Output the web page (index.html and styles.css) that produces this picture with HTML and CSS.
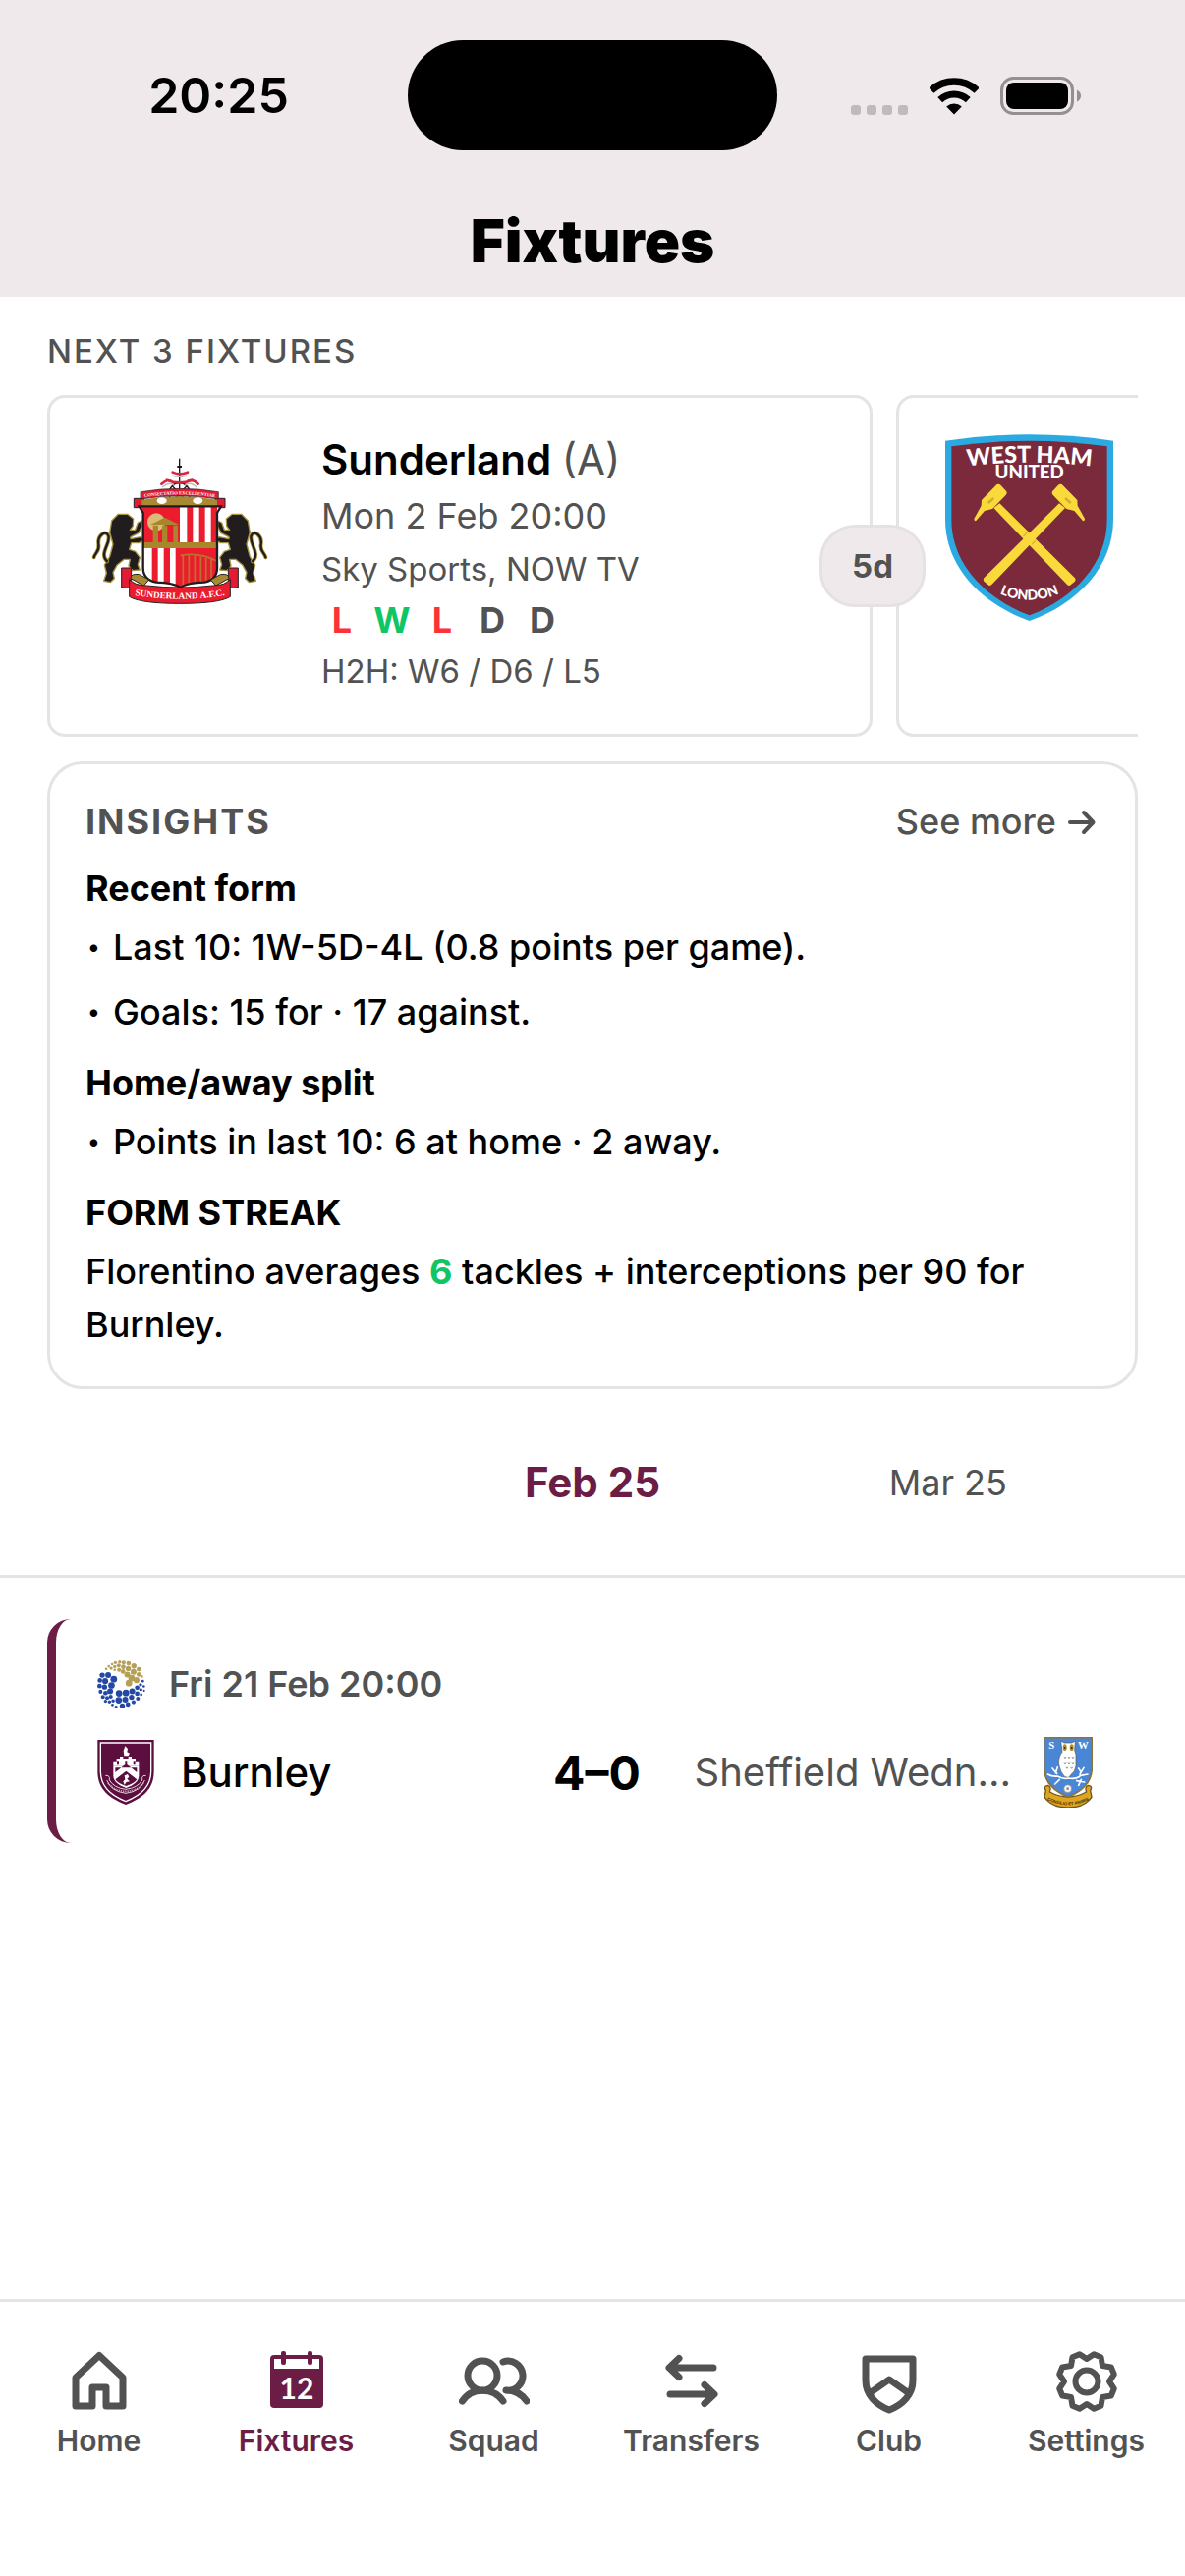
FILE: index.html
```html
<!DOCTYPE html>
<html lang="en">
<head>
    <meta charset="UTF-8">
    <meta name="viewport" content="width=device-width, initial-scale=1.0">
    <title>Fixtures</title>
    <link rel="stylesheet" href="styles.css">
</head>
<body>
    <header class="app-header">
        <div class="status-bar">
            <span class="status-time">20:25</span>
            <div class="island"></div>
            <div class="status-icons">
                <svg class="signal" viewBox="0 0 58 10">
                    <rect x="0" width="10" height="10" rx="3"/>
                    <rect x="16" width="10" height="10" rx="3"/>
                    <rect x="32" width="10" height="10" rx="3"/>
                    <rect x="48" width="10" height="10" rx="3"/>
                </svg>
                <svg class="wifi" viewBox="0 0 50 38">
                    <path d="M1.8 13.1A34 34 0 0 1 48.2 13.1" fill="none" stroke="#000" stroke-width="7.5"/>
                    <path d="M10.7 22.6A21 21 0 0 1 39.3 22.6" fill="none" stroke="#000" stroke-width="7"/>
                    <path d="M25 37.5L17.2 29.6A11.5 11.5 0 0 1 32.8 29.6Z"/>
                </svg>
                <svg class="battery" viewBox="0 0 82 39">
                    <rect x="1.5" y="1.5" width="72" height="36" rx="12" fill="none" stroke="#948f91" stroke-width="3"/>
                    <rect x="6" y="6" width="63" height="27" rx="8"/>
                    <path d="M78 13.5Q82 15.5 82 19.5T78 25.5Z" fill="#948f91"/>
                </svg>
            </div>
        </div>
        <h1 class="page-title">Fixtures</h1>
    </header>

    <main>
        <section class="next-fixtures">
            <h2 class="section-label">NEXT 3 FIXTURES</h2>
            <div class="fixture-strip">
                <article class="fixture-card">
                    <div class="fixture-crest">
                        <!-- Sunderland crest -->
                        <svg class="crest-sunderland" viewBox="40 27 540 468">
                            <!-- ship's wheel and mast -->
                            <g fill="none" stroke="#1b1718" stroke-width="4">
                                <circle cx="309" cy="157" r="32"/>
                                <path d="M309 50V190M277 157H341M287 134L331 180M331 134L287 180"/>
                                <path d="M302 75H316" stroke-width="6"/>
                            </g>
                            <path d="M288 92Q309 102 334 92M270 116Q309 132 348 116M254 128Q276 108 290 124M328 124Q345 108 366 128" fill="none" stroke="#d8243c" stroke-width="8" stroke-linecap="round"/>
                            <path d="M286 102Q309 110 332 102M256 138Q280 118 294 134M324 134Q340 118 362 138" fill="none" stroke="#bbb" stroke-width="4"/>
                            <!-- motto ribbon -->
                            <path d="M170 172H200V200H170ZM418 172H448V200H418Z" fill="#e31b32" stroke="#222" stroke-width="3"/>
                            <path d="M194 176Q309 154 424 176V196H194Z" fill="#a98a33"/>
                            <ellipse cx="255" cy="179" rx="15" ry="10" fill="#fff"/>
                            <ellipse cx="365" cy="179" rx="15" ry="10" fill="#fff"/>
                            <path d="M190 152Q309 132 428 152V174Q309 154 190 174Z" fill="#e31b32" stroke="#222" stroke-width="2"/>
                            <path id="motto" d="M192 170Q309 150 428 170" fill="none"/>
                            <text class="motto-text"><textPath href="#motto" startOffset="50%">CONSECTATIO EXCELLENTIAE</textPath></text>
                            <!-- lions -->
                            <g id="lion">
                                <path d="M98 428L78 424 86 400 80 375 96 350 106 312 96 276 102 240 122 220 150 220 168 234 167 256 158 268 174 268 182 246 194 240 194 258 184 278 160 290 160 296 190 290 202 298 186 308 162 308 156 328 174 334 188 352 182 374 188 390 166 392 154 378 158 358 140 358 118 376 106 398 110 416Z" fill="#211d1e" stroke="#a8953f" stroke-width="4" stroke-linejoin="round"/>
                                <path d="M88 364C62 340 100 310 92 286C84 266 58 286 62 312C66 334 52 336 48 352" fill="none" stroke="#a8953f" stroke-width="12" stroke-linecap="round"/>
                                <path d="M88 364C62 340 100 310 92 286C84 266 58 286 62 312C66 334 52 336 48 352" fill="none" stroke="#211d1e" stroke-width="7" stroke-linecap="round"/>
                            </g>
                            <use href="#lion" transform="translate(620 0) scale(-1 1)"/>
                            <!-- shield -->
                            <clipPath id="sunShield"><path d="M186 196H436L424 216V384Q424 420 385 428Q330 430 312 444Q292 430 238 428Q198 420 198 384V216Z"/></clipPath>
                            <g clip-path="url(#sunShield)">
                                <rect x="186" y="190" width="250" height="255" fill="#fff"/>
                                <rect x="186" y="190" width="124" height="120" fill="#ec1c2f"/>
                                <rect x="310" y="322" width="126" height="124" fill="#ec1c2f"/>
                                <path d="M332 196H350V310H332ZM369 196H387V310H369ZM405 196H424V310H405ZM225 322H243V445H225ZM261 322H280V445H261ZM297 322H310V445H297Z" fill="#ec1c2f"/>
                                <circle cx="238" cy="244" r="27" fill="#dcbb76"/>
                                <path d="M220 252L264 230 308 252ZM228 254H244V306H228ZM256 254H272V306H256ZM290 254H304V306H290Z" fill="#a8862c"/>
                                <path d="M190 306H430V324H190Z" fill="#a8862c"/>
                                <path d="M312 346Q370 336 420 362M320 348V440M338 346V440M356 346V440M374 350V440M390 354V440M406 358V440" fill="none" stroke="#b5762c" stroke-width="5"/>
                            </g>
                            <path d="M186 196H436L424 216V384Q424 420 385 428Q330 430 312 444Q292 430 238 428Q198 420 198 384V216Z" fill="none" stroke="#211d1e" stroke-width="7"/>
                            <!-- name scroll -->
                            <path d="M132 384H162V446L132 444ZM458 446V384H488V444Z" fill="#e31b32" stroke="#222" stroke-width="3"/>
                            <path d="M160 416Q160 400 186 404L216 420 200 438ZM460 416Q460 400 434 404L404 420 420 438Z" fill="#a98a33" stroke="#222" stroke-width="3"/>
                            <path d="M156 418Q170 438 210 438Q310 450 410 438Q450 438 464 418V472Q430 493 310 493Q190 493 156 472Z" fill="#ec1c2f" stroke="#222" stroke-width="3"/>
                            <path id="sunName" d="M160 466Q310 492 460 466" fill="none"/>
                            <text class="sun-text"><textPath href="#sunName" startOffset="50%">SUNDERLAND A.F.C.</textPath></text>
                        </svg>
                    </div>
                    <div class="fixture-info">
                        <h3 class="fixture-team">Sunderland <span class="venue">(A)</span></h3>
                        <p class="fixture-date">Mon 2 Feb 20:00</p>
                        <p class="fixture-tv">Sky Sports, NOW TV</p>
                        <div class="form-row">
                            <span class="form-loss">L</span>
                            <span class="form-win">W</span>
                            <span class="form-loss">L</span>
                            <span>D</span>
                            <span>D</span>
                        </div>
                        <p class="fixture-tv">H2H: W6 / D6 / L5</p>
                    </div>
                    <span class="days-badge">5d</span>
                </article>

                <article class="fixture-card">
                    <div class="fixture-crest">
                        <!-- West Ham crest -->
                        <svg class="crest-westham" viewBox="486 155 513 570">
                            <path d="M486 175Q743 137 999 175V415C999 560 890 672 743 725C596 672 486 560 486 415Z" fill="#2baae2"/>
                            <path d="M505 192Q743 158 980 192V415C980 550 880 655 743 708C606 655 505 550 505 415Z" fill="#7b2a3c"/>
                            <path id="whTop" d="M540 254Q743 228 946 254" fill="none"/>
                            <text class="wh-top"><textPath href="#whTop" startOffset="50%">WEST HAM</textPath></text>
                            <text class="wh-mid" x="743" y="291">UNITED</text>
                            <path id="whLow" d="M648 640Q743 682 838 640" fill="none"/>
                            <text class="wh-low"><textPath href="#whLow" startOffset="50%">LONDON</textPath></text>
                            <g id="hammer">
                                <path d="M634 380L652 366 882 594Q886 600 880 606L866 617Q860 618 856 612Z" fill="#fada3a"/>
                                <path d="M644 308Q650 305 655 310L673 330Q676 336 670 342L630 383 606 389 580 419Q574 421 574 413L596 373 597 356Z" fill="#fada3a"/>
                                <path d="M614 362L632 347 636 353 620 368Z" fill="#d3ad2d"/>
                            </g>
                            <use href="#hammer" transform="translate(1486 0) scale(-1 1)"/>
                            <path d="M724 468L736 456M750 492L762 480" stroke="#d9b32e" stroke-width="4"/>
                        </svg>
                    </div>
                </article>
            </div>
        </section>

        <section class="insights">
            <div class="insights-header">
                <h2 class="insights-title">INSIGHTS</h2>
                <a href="#" class="see-more">See more
                    <svg class="arrow" viewBox="0 0 32 28"><path d="M2 14H25M16 4L25.500 14 16 24"/></svg>
                </a>
            </div>
            <div class="insight">
                <h3>Recent form</h3>
                <ul>
                    <li>Last 10: 1W-5D-4L (0.8 points per game).</li>
                    <li>Goals: 15 for · 17 against.</li>
                </ul>
            </div>
            <div class="insight">
                <h3>Home/away split</h3>
                <ul>
                    <li>Points in last 10: 6 at home · 2 away.</li>
                </ul>
            </div>
            <div class="insight">
                <h3>FORM STREAK</h3>
                <p>Florentino averages <strong class="form-win">6</strong> tackles + interceptions per 90 for Burnley.</p>
            </div>
        </section>

        <div class="months">
            <button type="button" class="month active">Feb 25</button>
            <button type="button" class="month">Mar 25</button>
        </div>

        <article class="match">
            <div class="match-meta">
                <!-- EFL ball -->
                <svg class="crest-efl" viewBox="27 27 146 146">
                    <g fill="#b5a05a">
                        <circle cx="95" cy="32" r="5"/><circle cx="107" cy="34" r="6"/><circle cx="122" cy="36" r="7"/><circle cx="138" cy="44" r="8"/><circle cx="153" cy="54" r="7"/>
                        <circle cx="82" cy="34" r="5"/><circle cx="72" cy="39" r="4"/><circle cx="62" cy="45" r="4"/><circle cx="54" cy="53" r="4"/><circle cx="92" cy="43" r="6"/>
                        <circle cx="80" cy="46" r="5"/><circle cx="69" cy="51" r="5"/><circle cx="106" cy="47" r="7"/><circle cx="121" cy="52" r="8"/><circle cx="137" cy="62" r="9"/>
                        <circle cx="153" cy="70" r="7"/><circle cx="93" cy="56" r="6"/><circle cx="105" cy="61" r="7"/><circle cx="118" cy="70" r="9"/><circle cx="131" cy="81" r="10"/>
                        <circle cx="146" cy="87" r="9"/><circle cx="123" cy="96" r="10"/><circle cx="162" cy="76" r="4"/><circle cx="80" cy="56" r="4"/>
                    </g>
                    <g fill="#2448a5">
                        <circle cx="42" cy="72" r="8"/><circle cx="60" cy="72" r="9"/><circle cx="77" cy="84" r="10"/><circle cx="35" cy="88" r="7"/><circle cx="51" cy="90" r="9"/>
                        <circle cx="70" cy="103" r="10"/><circle cx="34" cy="105" r="7"/><circle cx="49" cy="108" r="8"/><circle cx="66" cy="121" r="9"/><circle cx="37" cy="122" r="6"/>
                        <circle cx="52" cy="126" r="7"/><circle cx="44" cy="138" r="6"/><circle cx="57" cy="141" r="6"/><circle cx="68" cy="137" r="6"/><circle cx="52" cy="151" r="5"/>
                        <circle cx="64" cy="153" r="5"/><circle cx="75" cy="150" r="5"/><circle cx="73" cy="162" r="4"/><circle cx="84" cy="168" r="4"/>
                        <circle cx="93" cy="127" r="10"/><circle cx="114" cy="126" r="10"/><circle cx="133" cy="121" r="9"/><circle cx="92" cy="148" r="10"/><circle cx="112" cy="146" r="9"/>
                        <circle cx="131" cy="139" r="8"/><circle cx="148" cy="128" r="7"/><circle cx="148" cy="110" r="7"/><circle cx="103" cy="165" r="8"/><circle cx="120" cy="161" r="7"/>
                        <circle cx="137" cy="154" r="6"/><circle cx="150" cy="143" r="6"/><circle cx="160" cy="131" r="4"/><circle cx="159" cy="116" r="5"/><circle cx="158" cy="101" r="5"/>
                        <circle cx="168" cy="106" r="4"/><circle cx="165" cy="90" r="4"/><circle cx="169" cy="119" r="3"/>
                    </g>
                </svg>
                <span>Fri 21 Feb 20:00</span>
            </div>
            <div class="match-row">
                <div class="side">
                    <!-- Burnley crest -->
                    <svg class="crest-burnley" viewBox="30 273 172 198">
                        <path d="M30 273H202V370C202 424 166 452 116 471C66 452 30 424 30 370Z" fill="#5c0f3f"/>
                        <path d="M39 282H193V370C193 418 160 444 116 461C72 444 39 418 39 370Z" fill="none" stroke="#fff" stroke-width="4"/>
                        <path d="M111 322L109 306 114 292 122 300 120 310 128 314 124 322ZM88 330H98V324H108V330H124V324H134V330H146V338H156V352H78V338H88Z" fill="#fff"/>
                        <path d="M78 352H156V382C156 400 140 412 117 420C94 412 78 400 78 382Z" fill="#fff"/>
                        <path d="M92 337V349M117 337V349M142 337V349" stroke="#5c0f3f" stroke-width="6"/>
                        <path d="M84 358H150V372L117 346 84 372ZM84 394L117 368 150 394Q142 406 117 414Q92 406 84 394Z" fill="#5c0f3f"/>
                        <path d="M112 382L122 378 126 386 120 392 128 400 118 402 112 410 108 400 114 394Z" fill="#fff"/>
                        <path d="M54 382Q64 380 66 388V396Q80 420 116 424Q152 420 166 396V388Q168 380 178 382M58 396Q70 430 116 436Q162 430 174 396" fill="none" stroke="#e5cfdc" stroke-width="3"/>
                        <path d="M62 404Q78 428 116 430Q154 428 170 404" fill="none" stroke="#d9b9cb" stroke-width="5" stroke-dasharray="3 3"/>
                    </svg>
                    <span class="team home">Burnley</span>
                </div>
                <strong class="score">4–0</strong>
                <div class="side away">
                    <span class="team">Sheffield Wednesday</span>
                    <div class="crest-slot">
                        <!-- Sheffield Wednesday crest -->
                        <svg class="crest-wednesday" viewBox="35 38 150 216">
                            <path d="M42 202Q34 188 48 186Q60 190 54 206Q110 236 166 206Q160 190 172 186Q186 188 178 202L182 222Q160 254 110 254Q60 254 38 222Z" fill="#dfa51e" stroke="#6e5523" stroke-width="4"/>
                            <path d="M37 40H183V130C183 180 150 204 110 222C70 204 37 180 37 130Z" fill="#4a86d6" stroke="#8d7434" stroke-width="5"/>
                            <path d="M88 50L98 56H122L132 50 130 78 134 92 134 126Q132 144 120 152L112 162 100 160Q86 146 82 122Q80 98 92 84Z" fill="#fff" stroke="#555" stroke-width="2"/>
                            <ellipse cx="100" cy="70" rx="6" ry="10" fill="#b4911f"/><ellipse cx="121" cy="70" rx="6" ry="10" fill="#b4911f"/>
                            <circle cx="100" cy="71" r="3" fill="#333"/><circle cx="121" cy="71" r="3" fill="#333"/>
                            <path d="M98 98l3 5 3-5M110 98l3 5 3-5M122 98l3 5 3-5M98 114l3 5 3-5M110 114l3 5 3-5M122 114l3 5 3-5M104 130l3 5 3-5M118 130l3 5 3-5" fill="none" stroke="#666" stroke-width="2"/>
                            <path d="M48 152Q62 160 78 158Q96 168 110 164Q136 168 148 156L170 152M62 134L76 150M78 130L72 148M158 132L146 152M142 134L150 146M70 182L84 168M160 176L136 172M142 186L150 168" fill="none" stroke="#fff" stroke-width="5" stroke-linecap="round"/>
                            <circle cx="109" cy="196" r="12" fill="#f4f4f4" stroke="#777" stroke-width="2"/><circle cx="109" cy="196" r="4" fill="#888"/>
                            <text class="sw-letter" x="60" y="74">S</text>
                            <text class="sw-letter" x="156" y="74">W</text>
                            <path id="swMotto" d="M46 230Q110 262 174 230" fill="none"/>
                            <text class="sw-motto"><textPath href="#swMotto" startOffset="50%">CONSILIO ET ANIMIS</textPath></text>
                        </svg>
                    </div>
                </div>
            </div>
        </article>
    </main>

    <nav class="tab-bar">
        <a href="#" class="tab">
            <svg class="tab-icon" viewBox="0 0 72 72"><path d="M12 33L36 10.500 60 33V62H43V43H29V62H12Z"/></svg>
            Home
        </a>
        <a href="#" class="tab active">
            <svg class="tab-icon solid" viewBox="0 0 72 72">
                <rect x="9" y="10" width="54" height="54" rx="4"/>
                <rect x="13" y="14" width="46" height="10" fill="#fff"/>
                <rect x="20" y="6" width="5" height="14" rx="2"/>
                <rect x="47" y="6" width="5" height="14" rx="2"/>
                <text class="tab-day" x="36" y="55">12</text>
            </svg>
            Fixtures
        </a>
        <a href="#" class="tab">
            <svg class="tab-icon" viewBox="0 0 72 72">
                <circle cx="24" cy="31" r="15"/>
                <path d="M3.500 57C13 42.500 35 42.500 45 57M45 17A15 15 0 1 1 48 46C57 46 64 50 69 57"/>
            </svg>
            Squad
        </a>
        <a href="#" class="tab">
            <svg class="tab-icon" viewBox="0 0 72 72"><path d="M58 23H14M23 13.500L13 23 23 32.500M14 50H58M49 40.500L59 50 49 59.500"/></svg>
            Transfers
        </a>
        <a href="#" class="tab">
            <svg class="tab-icon" viewBox="0 0 72 72"><path d="M12 14H60V36C60 51 49 61 36 66C23 61 12 51 12 36ZM16 49L36 35 56 49"/></svg>
            Club
        </a>
        <a href="#" class="tab">
            <svg class="tab-icon gear" viewBox="0 0 72 72">
                <g transform="translate(36 37)">
                    <circle r="11.500"/>
                    <path d="M0-23L7.300-27.800 14.500-24.800 16-16 24.800-14.500 27.800-7.300 23 0 27.800 7.300 24.800 14.500 16 16 14.500 24.800 7.300 27.800 0 23-7.300 27.800-14.500 24.800-16 16-24.800 14.500-27.800 7.300-23 0-27.800-7.300-24.800-14.500-16-16-14.500-24.800-7.300-27.800Z"/>
                </g>
            </svg>
            Settings
        </a>
    </nav>
</body>
</html>
```
FILE: styles.css
```css
* {
    box-sizing: border-box;
}

body {
    margin: 0;
    min-height: 100vh;
    display: flex;
    flex-direction: column;
    font-family: Inter, 'Liberation Sans', sans-serif;
    font-size: 36px;
    color: #000;
    background-color: #fff;
}

h1, h2, h3, p, ul {
    margin: 0;
    padding: 0;
    font-size: inherit;
}

svg {
    display: block;
    flex-shrink: 0;
}

/* Header */
.app-header {
    background-color: #efe9eb;
    padding: 41px 0 21px;
}

.status-bar {
    display: grid;
    grid-template-columns: 1fr 376px 1fr;
    align-items: center;
}

.status-time {
    padding-left: 30px;
    text-align: center;
    font-size: 50px;
    font-weight: 600;
}

.island {
    height: 112px;
    border-radius: 56px;
    background-color: #000;
}

.status-icons {
    display: flex;
    justify-content: flex-end;
    align-items: flex-end;
    gap: 22px;
    padding-right: 106px;
}

.signal {
    width: 58px;
    height: 10px;
    fill: #bfbabc;
}

.wifi {
    width: 50px;
    height: 38px;
}

.battery {
    width: 82px;
    height: 39px;
}

.page-title {
    margin-top: 56px;
    line-height: 72px;
    text-align: center;
    font-size: 60px;
    font-weight: 900;
}

/* Next fixtures */
main {
    flex: 1;
}

.next-fixtures {
    padding: 33px 48px 0;
}

.section-label {
    line-height: 45px;
    font-size: 33px;
    font-weight: 500;
    letter-spacing: 2px;
    color: #525252;
}

.fixture-strip {
    display: flex;
    gap: 24px;
    margin-top: 22px;
    overflow: hidden;
}

.fixture-card {
    position: relative;
    display: flex;
    flex: 0 0 840px;
    gap: 54px;
    padding: 36px 42px 40px;
    border: 3px solid #e4e4e4;
    border-radius: 18px;
}

.fixture-crest {
    display: flex;
    align-items: center;
    justify-content: center;
    width: 180px;
    height: 192px;
}

.crest-sunderland {
    width: 180px;
    height: 156px;
}

.crest-westham {
    width: 171px;
    height: 190px;
}

.fixture-info {
    display: flex;
    flex-direction: column;
    gap: 6px;
    color: #525252;
}

.fixture-team {
    line-height: 54px;
    font-size: 42px;
    font-weight: 600;
    color: #000;
}

.venue {
    font-weight: 400;
    color: #525252;
}

.fixture-date {
    line-height: 48px;
}

.fixture-tv {
    line-height: 48px;
    font-size: 33px;
}

.form-row {
    display: flex;
    gap: 9px;
    line-height: 44px;
    font-weight: 700;
}

.form-row span {
    width: 42px;
    text-align: center;
}

.form-win {
    color: #0fc565;
}

.form-loss {
    color: #fb3238;
}

.days-badge {
    position: absolute;
    top: 129px;
    right: -57px;
    z-index: 1;
    width: 108px;
    line-height: 78px;
    border: 3px solid #e6e2e4;
    border-radius: 36px;
    background-color: #efe9eb;
    text-align: center;
    font-size: 33px;
    font-weight: 700;
    color: #525252;
}

/* Crest lettering */
.motto-text {
    font: bold 14px 'Liberation Serif', serif;
    text-anchor: middle;
    fill: #fff;
}

.sun-text {
    font: bold 28px 'Liberation Serif', serif;
    text-anchor: middle;
    fill: #fff;
}

.wh-top {
    font: 900 70px Lato, sans-serif;
    text-anchor: middle;
    fill: #fff;
}

.wh-mid {
    font: 900 56px Lato, sans-serif;
    text-anchor: middle;
    fill: #fff;
}

.wh-low {
    font: 900 42px Lato, sans-serif;
    text-anchor: middle;
    fill: #fff;
}

.sw-letter {
    font: bold 32px 'Liberation Serif', serif;
    text-anchor: middle;
    fill: #fff;
}

.sw-motto {
    font: bold 13px 'Liberation Sans', sans-serif;
    text-anchor: middle;
    fill: #3b2f10;
}

/* Insights */
.insights {
    margin: 25px 48px 0;
    padding: 36px;
    border: 3px solid #e4e4e4;
    border-radius: 36px;
    line-height: 54px;
    font-weight: 500;
}

.insights-header {
    display: flex;
    justify-content: space-between;
    line-height: 45px;
    color: #525252;
}

.insights-title {
    font-weight: 700;
    letter-spacing: 2px;
}

.see-more {
    display: flex;
    align-items: center;
    gap: 12px;
    color: #525252;
    text-decoration: none;
}

.arrow {
    width: 32px;
    height: 28px;
    fill: none;
    stroke: #525252;
    stroke-width: 4;
    stroke-linecap: round;
    stroke-linejoin: round;
}

.insight {
    margin-top: 18px;
}

.insight h3 {
    margin-bottom: 6px;
    font-weight: 700;
}

.insight ul {
    display: flex;
    flex-direction: column;
    gap: 12px;
    list-style: none;
}

.insight li {
    display: flex;
}

.insight li::before {
    content: "•";
    width: 26px;
    padding-left: 2px;
    font-size: 24px;
}

/* Month picker */
.months {
    display: grid;
    grid-template-columns: repeat(3, 30%);
    justify-content: center;
    align-items: center;
    min-height: 192px;
    border-bottom: 3px solid #e4e4e4;
}

.month {
    padding: 0;
    border: none;
    background: none;
    font-family: inherit;
    font-size: 36px;
    color: #525252;
    cursor: pointer;
}

.month.active {
    grid-column: 2;
    font-size: 42px;
    font-weight: 700;
    color: #6c1d45;
}

/* Match */
.match {
    margin: 42px 48px 0;
    padding: 39px 42px 36px;
    border-left: 9px solid #6c1d45;
    border-radius: 24px;
}

.match-meta {
    display: flex;
    align-items: center;
    gap: 24px;
    height: 54px;
    font-weight: 600;
    color: #525252;
}

.crest-efl {
    width: 49px;
    height: 49px;
}

.match-row {
    display: grid;
    grid-template-columns: minmax(0, 1fr) 90px minmax(0, 1fr);
    align-items: center;
    gap: 54px;
    height: 72px;
    margin-top: 27px;
}

.side {
    display: flex;
    align-items: center;
    gap: 27px;
}

.side.away {
    text-align: right;
}

.team {
    flex: 1;
    line-height: 54px;
    overflow: hidden;
    text-overflow: ellipsis;
    white-space: nowrap;
    font-size: 40px;
    font-variant-ligatures: none;
    color: #525252;
}

.team.home {
    font-size: 42px;
    font-weight: 500;
    color: #000;
}

.score {
    text-align: center;
    white-space: nowrap;
    font-size: 48px;
    font-weight: 700;
}

.crest-burnley {
    width: 58px;
    height: 66px;
}

.crest-slot {
    display: flex;
    justify-content: center;
    width: 58px;
}

.crest-wednesday {
    width: 50px;
    height: 72px;
}

/* Tab bar */
.tab-bar {
    display: flex;
    padding: 44px 0 102px;
    border-top: 3px solid #e4e4e4;
}

.tab {
    display: flex;
    flex: 1;
    flex-direction: column;
    align-items: center;
    gap: 6px;
    height: 133px;
    line-height: 39px;
    font-size: 30px;
    font-weight: 600;
    color: #525252;
    text-decoration: none;
}

.tab.active {
    color: #6c1d45;
}

.tab-icon {
    width: 72px;
    height: 72px;
    fill: none;
    stroke: currentColor;
    stroke-width: 7;
    stroke-linecap: round;
    stroke-linejoin: round;
}

.tab-icon.gear {
    stroke-width: 6;
}

.tab-icon.solid {
    fill: currentColor;
    stroke: none;
}

.tab-day {
    font: 700 30px Lato, sans-serif;
    text-anchor: middle;
    fill: #fff;
}
```
